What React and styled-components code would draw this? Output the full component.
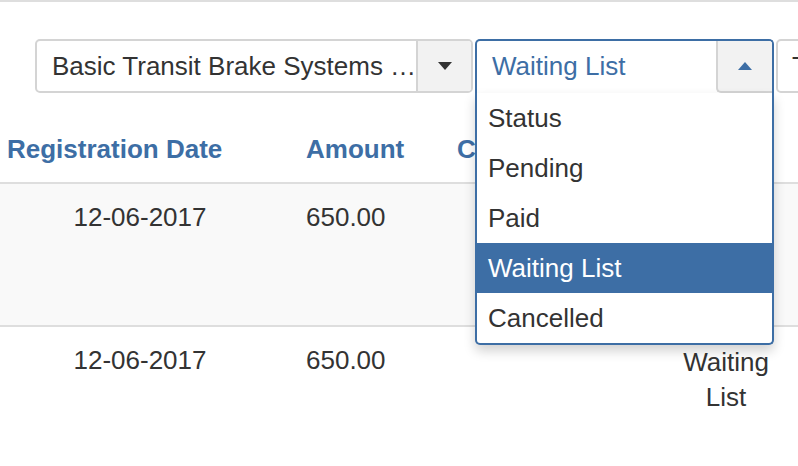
import React from "react";
import styled, { createGlobalStyle } from "styled-components";

const GlobalStyle = createGlobalStyle`
  html, body {
    margin: 0;
    padding: 0;
    background: #fff;
    overflow: hidden;
  }
  body {
    width: 798px;
    height: 466px;
    font-family: "Liberation Sans", Arial, sans-serif;
    font-size: 26px;
    line-height: 34px;
    color: #333;
  }
  * {
    box-sizing: border-box;
  }
`;

const blue = "#3d6ea5";

const options = ["Status", "Pending", "Paid", "Waiting List", "Cancelled"];

const rows = [
  { date: "12-06-2017", amount: "650.00", status: "Waiting List", tall: true },
  { date: "12-06-2017", amount: "650.00", status: "Waiting List" },
];

export default function App() {
  return (
    <>
      <GlobalStyle />
      <Page>
        <FilterBar>
          <Select $width={438}>
            <SelectValue>Basic Transit Brake Systems …</SelectValue>
            <ArrowBox>
              <Caret />
            </ArrowBox>
          </Select>
          <SelectWrap>
            <Select $width={299} $open>
              <SelectValue $open>Waiting List</SelectValue>
              <ArrowBox $open>
                <Caret $up />
              </ArrowBox>
            </Select>
            <Menu>
              {options.map((opt) => (
                <Option key={opt} $active={opt === "Waiting List"}>
                  {opt}
                </Option>
              ))}
            </Menu>
          </SelectWrap>
          <Select $width={220}>
            <SelectValue $tight>Training Type</SelectValue>
          </Select>
        </FilterBar>

        <Table>
          <colgroup>
            <col style={{ width: 298 }} />
            <col style={{ width: 151 }} />
            <col style={{ width: 221 }} />
            <col style={{ width: 112 }} />
            <col style={{ width: 16 }} />
          </colgroup>
          <thead>
            <tr>
              <Th $first>Registration Date</Th>
              <Th>Amount</Th>
              <Th>Course</Th>
              <Th>Status</Th>
              <Th />
            </tr>
          </thead>
          <tbody>
            {rows.map((row, i) => (
              <Row key={i} $striped={i % 2 === 0} $tall={row.tall}>
                <Td $date>{row.date}</Td>
                <Td>{row.amount}</Td>
                <Td />
                <Td $status>{row.status}</Td>
                <Td />
              </Row>
            ))}
          </tbody>
        </Table>
      </Page>
    </>
  );
}

const Page = styled.div`
  width: 798px;
  height: 466px;
  border-top: 2px solid #dedede;
  overflow: hidden;
`;

const FilterBar = styled.div`
  display: flex;
  gap: 2px;
  padding: 37px 0 0 35px;
  white-space: nowrap;
`;

const SelectWrap = styled.div`
  position: relative;
  flex: none;
`;

const Select = styled.div`
  flex: none;
  display: flex;
  align-items: stretch;
  width: ${({ $width }) => $width}px;
  height: 54px;
  border: ${({ $open }) => ($open ? `2px solid ${blue}` : "2px solid #d4d4d4")};
  border-radius: ${({ $open }) => ($open ? "5px 5px 0 0" : "5px")};
  border-bottom: ${({ $open }) => ($open ? "none" : undefined)};
  background: #fff;
  overflow: hidden;
`;

const SelectValue = styled.div`
  flex: 1;
  padding: 8px 0 0 ${({ $tight }) => ($tight ? 14 : 15)}px;
  color: ${({ $open }) => ($open ? blue : "#333")};
  overflow: hidden;
`;

const ArrowBox = styled.div`
  flex: none;
  width: ${({ $open }) => ($open ? 56 : 55)}px;
  display: flex;
  align-items: center;
  justify-content: center;
  background: #f2f2f2;
  border-left: 2px solid #d4d4d4;
  ${({ $open }) =>
    $open &&
    `
    height: 52px;
    border-bottom: 2px solid #d4d4d4;
    border-bottom-left-radius: 5px;
  `}
`;

const Caret = styled.span`
  width: 0;
  height: 0;
  border-left: 7px solid transparent;
  border-right: 7px solid transparent;
  ${({ $up }) =>
    $up
      ? `border-bottom: 8px solid ${blue};`
      : `border-top: 8px solid #333;`}
`;

const Menu = styled.ul`
  position: absolute;
  top: 54px;
  left: 0;
  width: 299px;
  margin: 0;
  padding: 0;
  list-style: none;
  background: #fff;
  border: 2px solid ${blue};
  border-top: none;
  border-radius: 0 0 5px 5px;
  box-shadow: 0 6px 12px rgba(0, 0, 0, 0.18);
  z-index: 10;
`;

const Option = styled.li`
  height: 50px;
  padding: 8px 11px;
  background: ${({ $active }) => ($active ? blue : "transparent")};
  color: ${({ $active }) => ($active ? "#fff" : "#333")};
`;

const Table = styled.table`
  width: 798px;
  table-layout: fixed;
  border-collapse: collapse;
`;

const Th = styled.th`
  padding: 39px 8px 16px ${({ $first }) => ($first ? 7 : 8)}px;
  text-align: left;
  vertical-align: bottom;
  font-weight: bold;
  color: ${blue};
  white-space: nowrap;
  overflow: hidden;
  border-bottom: 2px solid #dedede;
`;

const Row = styled.tr`
  height: ${({ $tall }) => ($tall ? "143px" : "auto")};
  background: ${({ $striped }) => ($striped ? "#f9f9f9" : "#fff")};
  border-bottom: 2px solid #dedede;

  &:last-child {
    border-bottom: none;
  }
`;

const Td = styled.td`
  vertical-align: top;
  padding: ${({ $date, $status }) =>
    $date ? "16px 18px 16px 0" : $status ? "18px 8px 16px" : "16px 8px"};
  line-height: ${({ $status }) => ($status ? "35px" : "34px")};
  text-align: ${({ $date, $status }) => ($date || $status ? "center" : "left")};
`;
